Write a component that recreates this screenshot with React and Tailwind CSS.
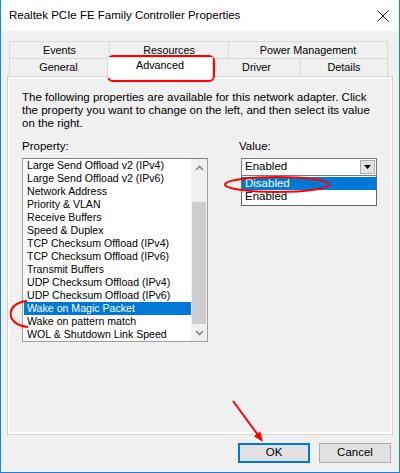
import React from 'react'

const font = { fontFamily: '"Liberation Sans", Arial, sans-serif' }

const properties = [
  'Large Send Offload v2 (IPv4)',
  'Large Send Offload v2 (IPv6)',
  'Network Address',
  'Priority & VLAN',
  'Receive Buffers',
  'Speed & Duplex',
  'TCP Checksum Offload (IPv4)',
  'TCP Checksum Offload (IPv6)',
  'Transmit Buffers',
  'UDP Checksum Offload (IPv4)',
  'UDP Checksum Offload (IPv6)',
  'Wake on Magic Packet',
  'Wake on pattern match',
  'WOL & Shutdown Link Speed',
]

function Chevron({ up }) {
  return (
    <svg width="9" height="6" viewBox="0 0 9 6" className="text-[#858585]">
      <polyline
        points={up ? '1,5 4.5,1.5 8,5' : '1,1 4.5,4.5 8,1'}
        fill="none"
        stroke="currentColor"
        strokeWidth="1.6"
      />
    </svg>
  )
}

function Annotations() {
  return (
    <svg className="absolute inset-0 pointer-events-none" width="400" height="473" viewBox="0 0 400 473">
      <rect x="107" y="56" width="106" height="25" rx="5" fill="none" stroke="#f00" strokeWidth="2" />
      <ellipse cx="276" cy="184.5" rx="52" ry="7.5" fill="none" stroke="#f00" strokeWidth="2" />
      <path d="M 26 301 C 4 303, 4 325, 27 327" fill="none" stroke="#f00" strokeWidth="2" />
      <line x1="232" y1="401" x2="257" y2="435" stroke="#f00" strokeWidth="2" />
      <polygon points="262,442 252.9,436.3 259.3,431.5" fill="#f00" />
    </svg>
  )
}

export default function App() {
  return (
    <div className="relative w-[400px] h-[473px] bg-[#f0f0f0] border-l border-r border-b border-[#1883d7] flex flex-col text-[11.5px] text-black" style={font}>
      {/* title bar */}
      <div className="h-[31px] bg-white flex items-center justify-between pl-[8px] pr-[10px]">
        <span className="text-[11.5px]">Realtek PCIe FE Family Controller Properties</span>
        <svg width="12" height="12" viewBox="0 0 12 12">
          <path d="M0.5 0.5 L11.5 11.5 M11.5 0.5 L0.5 11.5" stroke="#111" strokeWidth="1" />
        </svg>
      </div>

      {/* tabs */}
      <div className="mt-[10px] ml-[8px] flex flex-col text-[10.8px]">
        <div className="flex h-[17px]">
          <div className="w-[100px] border-t border-l border-[#d9d9d9] flex items-center justify-center">Events</div>
          <div className="w-[119px] border-t border-l border-[#d9d9d9] flex items-center justify-center">Resources</div>
          <div className="w-[160px] border-t border-l border-r border-[#d9d9d9] flex items-center justify-center">Power Management</div>
        </div>
        <div className="flex items-end h-[18px]">
          <div className="w-[98px] h-[18px] border-t border-l border-[#d9d9d9] flex items-center justify-center">General</div>
          <div className="relative z-10 w-[106px] h-[21px] -mb-[2px] bg-white border-t border-l border-r border-[#d9d9d9] flex items-start justify-center leading-[15px]">Advanced</div>
          <div className="w-[87px] h-[18px] border-t border-[#d9d9d9] flex items-center justify-center">Driver</div>
          <div className="w-[88px] h-[18px] border-t border-l border-r border-[#d9d9d9] flex items-center justify-center">Details</div>
        </div>
      </div>

      {/* page */}
      <div className="mx-[6px] h-[359px] border border-[#d4d4d4]">
        <div className="h-full border-[2px] border-white pt-[12px] pl-[12px]">
          <p className="leading-[13px]">
            The following properties are available for this network adapter. Click<br />
            the property you want to change on the left, and then select its value<br />
            on the right.
          </p>

          <div className="flex mt-[10px]">
            <div className="w-[186px] flex flex-col">
              <div className="leading-[13px]">Property:</div>
              <div className="mt-[5px] h-[184px] bg-white border border-[#a0a0a0] border-t-[#828282] flex text-[10.6px]">
                <div className="flex-1 flex flex-col">
                  {properties.map((p) => (
                    <div
                      key={p}
                      className={
                        p === 'Wake on Magic Packet'
                          ? 'h-[13px] leading-[13px] pl-[3px] ml-[1px] bg-[#0078d7] text-white whitespace-nowrap'
                          : 'h-[13px] leading-[13px] pl-[4px] whitespace-nowrap'
                      }
                    >
                      {p}
                    </div>
                  ))}
                </div>
                <div className="w-[16px] bg-[#f0f0f0] flex flex-col items-center">
                  <div className="h-[17px] flex items-center justify-center"><Chevron up /></div>
                  <div className="w-full flex-1 flex flex-col">
                    <div className="h-[26px]" />
                    <div className="h-[122px] bg-[#cdcdcd] mx-[1px]" />
                    <div className="flex-1" />
                  </div>
                  <div className="h-[17px] flex items-center justify-center"><Chevron /></div>
                </div>
              </div>
            </div>

            <div className="ml-[31px] flex flex-col">
              <div className="leading-[13px]">Value:</div>
              <div className="ml-[2px] mt-[5px] w-[136px] flex flex-col">
                <div className="h-[18px] bg-white border border-[#7a7a7a] flex items-center justify-between pl-[3px] pr-[1px]">
                  <span>Enabled</span>
                  <div className="w-[15px] h-[14px] bg-[#e1e1e1] border border-[#adadad] flex items-center justify-center">
                    <svg width="7" height="4" viewBox="0 0 7 4"><polygon points="0,0 7,0 3.5,4" fill="#000" /></svg>
                  </div>
                </div>
                <div className="bg-white border border-[#646464] border-t-0 pb-[2px] flex flex-col">
                  <div className="h-[13px] leading-[13px] pl-[3px] mt-[1px] bg-[#0078d7] text-white">Disabled</div>
                  <div className="h-[13px] leading-[13px] pl-[3px]">Enabled</div>
                </div>
              </div>
            </div>
          </div>
        </div>
      </div>

      {/* buttons */}
      <div className="mt-[8px] flex justify-end gap-[9px] pr-[8px]">
        <button className="w-[72px] h-[20px] bg-[#e1e1e1] border-2 border-[#0078d7] flex items-center justify-center">OK</button>
        <button className="w-[72px] h-[20px] bg-[#e1e1e1] border border-[#adadad] flex items-center justify-center">Cancel</button>
      </div>

      <Annotations />
    </div>
  )
}
